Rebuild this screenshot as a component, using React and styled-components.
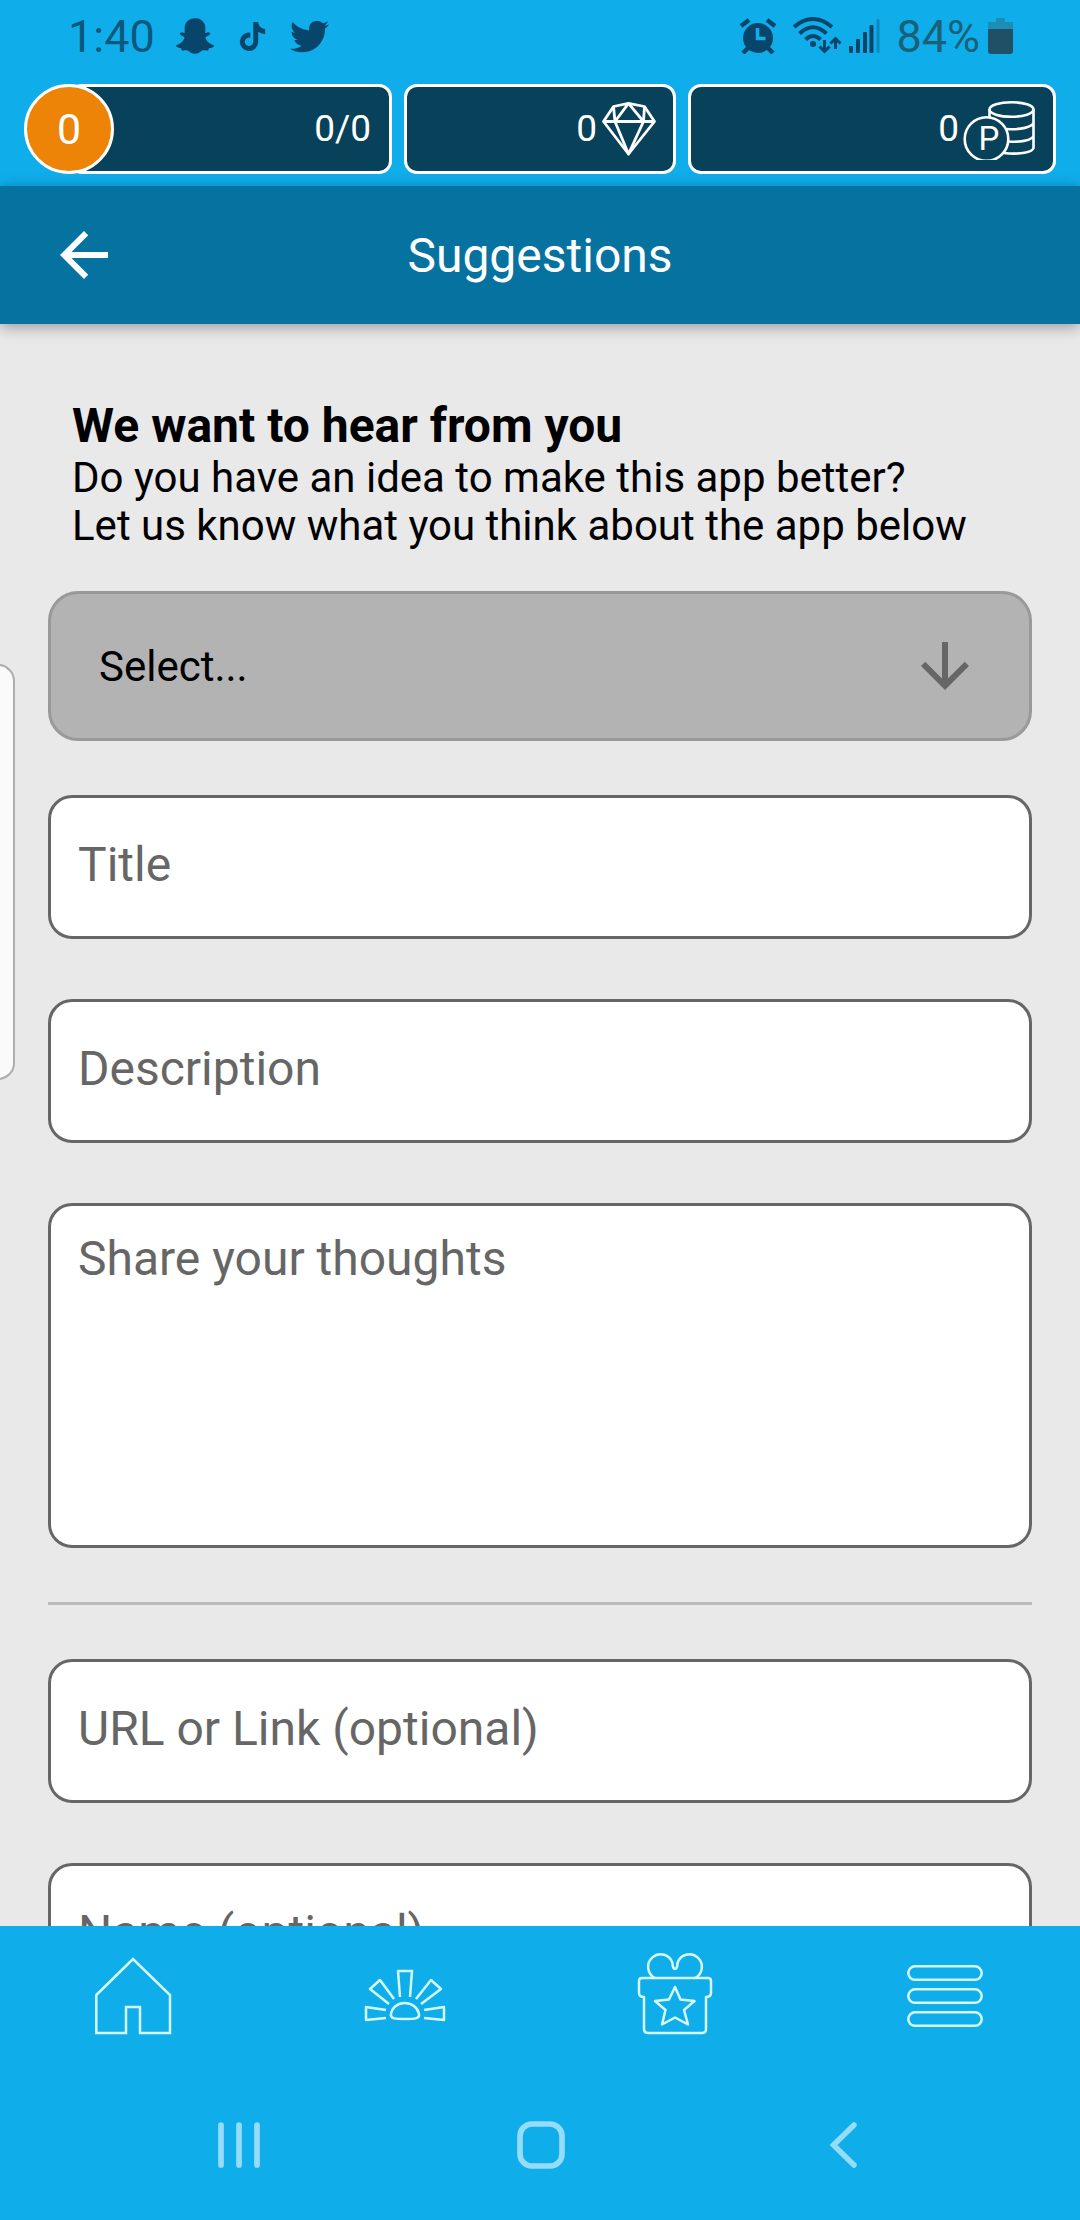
import React from 'react';
import styled, { createGlobalStyle } from 'styled-components';
import { FaSnapchatGhost, FaTiktok, FaTwitter } from 'react-icons/fa';
import { MdArrowBack, MdArrowDownward } from 'react-icons/md';

const GlobalStyle = createGlobalStyle`
  * {
    box-sizing: border-box;
  }
  body {
    margin: 0;
    background-color: #e9e9e9;
    font-family: Roboto, 'Liberation Sans', sans-serif;
  }
`

const Screen = styled.div`
  position: relative;
  display: flex;
  flex-direction: column;
  width: 1080px;
  height: 2220px;
  overflow: hidden;
  background-color: #e9e9e9;
`

const TopArea = styled.div`
  flex: none;
  height: 186px;
  background-color: #10adeb;
`

const StatusBar = styled.div`
  display: flex;
  justify-content: space-between;
  align-items: center;
  height: 72px;
  padding: 0 67px 0 68px;
  color: #07466a;
`

const StatusGroup = styled.div`
  display: flex;
  align-items: center;
  height: 72px;
`

const StatusText = styled.span`
  padding-top: 2px;
  font-size: 45px;
  line-height: 72px;
  color: ${props => props.color || '#0b587c'};
`

const StatusIcon = styled.span`
  display: flex;
  margin-left: ${props => props.gap}px;
`

const Stats = styled.div`
  display: grid;
  grid-template-columns: 368px 272px 368px;
  gap: 12px;
  padding: 12px 24px;
`

const LevelStat = styled.div`
  display: flex;
`

const LevelBadge = styled.div`
  z-index: 1;
  width: 90px;
  height: 90px;
  border: 3px solid #fff;
  border-radius: 50%;
  background-color: #ed8407;
  color: #fff;
  font-size: 43px;
  line-height: 85px;
  text-align: center;
`

const Stat = styled.div`
  display: flex;
  flex: 1;
  justify-content: flex-end;
  align-items: center;
  height: 90px;
  margin-left: ${props => props.tucked ? '-45px' : '0'};
  padding-right: ${props => props.inset}px;
  border: 3px solid #fff;
  border-radius: 13px;
  background-color: #08415a;
  color: #fff;
  font-size: 37px;
  line-height: 84px;
`

const Header = styled.header`
  z-index: 1;
  display: grid;
  grid-template-columns: 120px 1fr 120px;
  align-items: center;
  flex: none;
  height: 138px;
  background-color: #06729f;
  color: #fff;
  box-shadow: 0 3px 14px rgba(0, 0, 0, 0.35);
`

const BackButton = styled.div`
  display: flex;
  padding-left: 48px;
`

const HeaderTitle = styled.h1`
  margin: 0;
  font-size: 48px;
  font-weight: 400;
  text-align: center;
`

const Content = styled.main`
  flex: 1;
  min-height: 0;
  padding: 73px 48px 0;
  overflow: hidden;
`

const Intro = styled.div`
  padding-left: 24px;
  margin-bottom: 41px;
  color: #000;
`

const IntroTitle = styled.h2`
  margin: 0;
  font-size: 48px;
  line-height: 57px;
  font-weight: 700;
`

const IntroText = styled.p`
  margin: 0;
  font-size: 42px;
  line-height: 48px;
  white-space: nowrap;
`

const Select = styled.div`
  display: flex;
  justify-content: space-between;
  align-items: center;
  height: 150px;
  margin-bottom: 54px;
  padding: 0 48px;
  border: 3px solid #999;
  border-radius: 30px;
  background-color: #b3b3b3;
  color: #000;
  font-size: 42px;

  svg {
    color: #666;
  }
`

const Field = styled.div`
  height: ${props => props.tall ? 345 : 144}px;
  margin-bottom: ${props => props.tall ? 54 : 60}px;
  padding: ${props => props.tall ? '25px' : '39px'} 27px 0;
  border: 3px solid #666;
  border-radius: 24px;
  background-color: #fff;
  color: #666;
  font-size: 48px;
  line-height: 56px;
`

const Divider = styled.div`
  height: 3px;
  margin-bottom: 54px;
  background-color: #bbb;
`

const TabBar = styled.nav`
  display: grid;
  grid-template-columns: repeat(4, 1fr);
  justify-items: center;
  flex: none;
  height: 150px;
  padding-top: 20px;
  background-color: #10adeb;
`

const SystemBar = styled.div`
  display: flex;
  justify-content: space-between;
  align-items: center;
  flex: none;
  height: 144px;
  padding: 0 212px 6px;
  background-color: #10adeb;
`

// edge panel handle, floats over the page
const EdgeHandle = styled.div`
  position: absolute;
  left: -20px;
  top: 664px;
  z-index: 2;
  width: 35px;
  height: 416px;
  border: 2px solid #adadad;
  border-radius: 17px;
  background-color: #fafafa;
`

const AlarmIcon = () => (
  <svg width="38" height="36" viewBox="0 0 38 36">
    <circle cx="19" cy="20" r="15" fill="#07466a" />
    <path d="M2 8l8-6M36 8l-8-6" stroke="#07466a" strokeWidth="4.5" />
    <path d="M9 30l-5 5M29 30l5 5" stroke="#07466a" strokeWidth="4.5" />
    <path d="M18.5 10v10.5h8" fill="none" stroke="#10adeb" strokeWidth="3.5" />
  </svg>
)

const WifiIcon = () => (
  <svg width="50" height="38" viewBox="0 0 50 38" fill="none" stroke="#07466a">
    <path d="M2 10Q21-6 40 10M7.5 16.5Q21 4 34.5 16.5M13.5 22.5Q21 15.5 28.5 22.5" strokeWidth="4" />
    <circle cx="21" cy="27" r="3" fill="#07466a" stroke="none" />
    <path d="M32.5 23v11M27.5 29.5l5 5 5-5M43.5 32v-10M38.5 26.5l5-5 5 5" strokeWidth="3" />
  </svg>
)

const SignalIcon = () => (
  <svg width="32" height="34" viewBox="0 0 32 34" fill="#07466a">
    <rect x="0" y="27" width="4" height="7" rx="1" />
    <rect x="7" y="20" width="4" height="14" rx="1" />
    <rect x="14" y="13" width="4" height="21" rx="1" />
    <rect x="20.5" y="6" width="4" height="28" rx="1" />
    <rect x="27.5" y="0" width="3" height="34" rx="1" opacity="0.35" />
  </svg>
)

const BatteryIcon = () => (
  <svg width="25" height="36" viewBox="0 0 25 36">
    <path d="M8 0h9v4h8v7H0V4h8z" fill="#1c8db5" />
    <path d="M0 11h25v22a3 3 0 0 1-3 3H3a3 3 0 0 1-3-3z" fill="#205065" />
  </svg>
)

const DiamondIcon = () => (
  <svg width="54" height="56" viewBox="0 0 54 56" fill="none" stroke="#fff" strokeWidth="2.8" strokeLinejoin="round">
    <path d="M26.5 2.4L42.5 5.5 52.5 20.5 26.5 53 1.5 20.5 11.5 5.5z" />
    <path d="M1.5 20.5h51M11.5 5.5L13 20.5 26.5 2.4 41.5 20.5 42.5 5.5M13 20.5L26.5 53 41.5 20.5" />
  </svg>
)

const CoinsIcon = () => (
  <svg width="72" height="62" viewBox="0 0 72 62" fill="none" stroke="#fff" strokeWidth="2.6">
    <ellipse cx="48.5" cy="11.5" rx="22" ry="7.3" />
    <path d="M26.5 11.5v8M70.5 11.5V50c-1 4-13 7-30 5M70.5 25c-2 4-12 7-27 6M70.5 38c-2 4-11 6.5-25 5.5" />
    <circle cx="23.5" cy="41" r="21.8" />
    <text x="15.5" y="52" fill="#fff" stroke="none" fontFamily="Roboto, sans-serif" fontSize="33">P</text>
  </svg>
)

const HomeIcon = () => (
  <svg width="80" height="90" viewBox="0 0 80 90" fill="none" stroke="#d4fbff" strokeWidth="2.5">
    <path d="M1.3 49L38 13 75 49V87H45V61H31V87H1.3z" />
  </svg>
)

const SunIcon = () => (
  <svg width="84" height="90" viewBox="0 0 84 90" fill="none" stroke="#d4fbff" strokeWidth="2.5" strokeLinejoin="round">
    <path d="M28 68c1-7 7-11 14-11s13 5 14 11c1 5-5 5-14 5s-15 0-14-5z" />
    <path d="M37 51L35 25h14l-2 26M31 53L17 34l-10 9 19 15M53 53l15-19 10 9-20 15M23 64L3 61v13l20-2M61 64l20-3v13l-20-2" />
  </svg>
)

const GiftIcon = () => (
  <svg width="76" height="90" viewBox="0 0 76 90" fill="none" stroke="#d4fbff" strokeWidth="2.5" strokeLinejoin="round">
    <path d="M18 32A12.5 12.5 0 1 1 35.5 17c0 8 5 8 5 0A12.5 12.5 0 1 1 58 32" />
    <path d="M5 32H71q3 0 3 3V47q0 4-5 4V83q0 4-4 4H11q-4 0-4-4V51Q2 51 2 47V35q0-3 3-3z" />
    <path d="M38 41l5.5 12.5 14 1.5-10.5 9 4 14.5-13-7-13 7 3.5-14.5L18 55l14-1.5z" />
  </svg>
)

const MenuIcon = () => (
  <svg width="76" height="90" viewBox="0 0 76 90" fill="none" stroke="#d4fbff" strokeWidth="2.5">
    <rect x="1.3" y="20.3" width="73.4" height="13.5" rx="6.7" />
    <rect x="1.3" y="43.3" width="73.4" height="13.5" rx="6.7" />
    <rect x="1.3" y="66.3" width="73.4" height="13.5" rx="6.7" />
  </svg>
)

const RecentsIcon = () => (
  <svg width="54" height="50" viewBox="0 0 54 50" stroke="#94dcf8" strokeWidth="5.7" strokeLinecap="round">
    <path d="M9 5v40M27 5v40M45 5v40" />
  </svg>
)

const SystemHomeIcon = () => (
  <svg width="54" height="54" viewBox="0 0 54 54" fill="none" stroke="#94dcf8" strokeWidth="5.7">
    <rect x="7" y="6" width="42" height="42" rx="12" />
  </svg>
)

const SystemBackIcon = () => (
  <svg width="54" height="50" viewBox="0 0 54 50" fill="none" stroke="#94dcf8" strokeWidth="5.5" strokeLinecap="round">
    <path d="M40 5L19.5 25 40 45" />
  </svg>
)

const App = () => {
  return (
    <Screen>
      <GlobalStyle />
      <TopArea>
        <StatusBar>
          <StatusGroup>
            <StatusText>1:40</StatusText>
            <StatusIcon gap={21}><FaSnapchatGhost size={38} /></StatusIcon>
            <StatusIcon gap={24}><FaTiktok size={29} /></StatusIcon>
            <StatusIcon gap={23}><FaTwitter size={39} /></StatusIcon>
          </StatusGroup>
          <StatusGroup>
            <AlarmIcon />
            <StatusIcon gap={15}><WifiIcon /></StatusIcon>
            <StatusIcon gap={7}><SignalIcon /></StatusIcon>
            <StatusIcon gap={15}><StatusText color="#1a6079">84%</StatusText></StatusIcon>
            <StatusIcon gap={8}><BatteryIcon /></StatusIcon>
          </StatusGroup>
        </StatusBar>
        <Stats>
          <LevelStat>
            <LevelBadge>0</LevelBadge>
            <Stat tucked inset={18}>0/0</Stat>
          </LevelStat>
          <Stat inset={17}>0 <StatusIcon gap={5}><DiamondIcon /></StatusIcon></Stat>
          <Stat inset={18}>0 <StatusIcon gap={4}><CoinsIcon /></StatusIcon></Stat>
        </Stats>
      </TopArea>

      <Header>
        <BackButton><MdArrowBack size={72} /></BackButton>
        <HeaderTitle>Suggestions</HeaderTitle>
      </Header>

      <Content>
        <Intro>
          <IntroTitle>We want to hear from you</IntroTitle>
          <IntroText>Do you have an idea to make this app better?</IntroText>
          <IntroText>Let us know what you think about the app below</IntroText>
        </Intro>
        <Select>
          Select...
          <MdArrowDownward size={72} />
        </Select>
        <Field>Title</Field>
        <Field>Description</Field>
        <Field tall>Share your thoughts</Field>
        <Divider />
        <Field>URL or Link (optional)</Field>
        <Field>Name (optional)</Field>
      </Content>

      <TabBar>
        <HomeIcon />
        <SunIcon />
        <GiftIcon />
        <MenuIcon />
      </TabBar>
      <SystemBar>
        <RecentsIcon />
        <SystemHomeIcon />
        <SystemBackIcon />
      </SystemBar>
      <EdgeHandle />
    </Screen>
  )
};

export default App;
